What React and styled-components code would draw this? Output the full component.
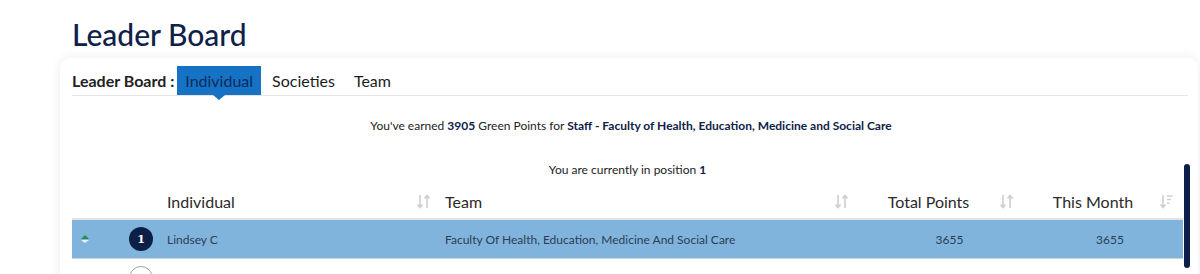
import styled, { createGlobalStyle } from "styled-components";

const GlobalStyle = createGlobalStyle`
  body {
    margin: 0;
    background: #ffffff;
    font-family: Lato, "Open Sans", sans-serif;
    color: #2b3a4a;
  }
`;

const Page = styled.div`
  width: 1200px;
  height: 274px;
  overflow: hidden;
  padding: 15px 2px 0 60px;
  box-sizing: border-box;
`;

const Title = styled.h1`
  margin: 0 0 5px 12px;
  font-size: 30px;
  font-weight: 500;
  line-height: 38px;
  color: #0f2149;
`;

const Card = styled.div`
  background: #fff;
  border-radius: 10px 10px 0 0;
  box-shadow: 0 0 12px rgba(0, 0, 0, 0.08);
  padding: 8px 8px 0 12px;
  height: 300px;
`;

const TabBar = styled.div`
  display: flex;
  align-items: stretch;
  height: 29px;
  border-bottom: 1px solid #e4e4e4;
  margin-right: 2px;
`;

const TabLabel = styled.span`
  display: flex;
  align-items: center;
  font-size: 16px;
  font-weight: 700;
  color: #222;
  margin-right: 3px;
`;

const Tab = styled.button`
  position: relative;
  border: none;
  font-family: inherit;
  font-size: 16px;
  padding: 0 8px;
  margin-right: 3px;
  color: ${(p) => (p.$active ? "#0c2b5c" : "#1c1c1c")};
  background: ${(p) => (p.$active ? "#1672c4" : "transparent")};

  &::after {
    content: "";
    display: ${(p) => (p.$active ? "block" : "none")};
    position: absolute;
    left: 50%;
    bottom: -5px;
    margin-left: -6px;
    border-left: 6px solid transparent;
    border-right: 6px solid transparent;
    border-top: 5px solid #1672c4;
  }
`;

const Message = styled.p`
  margin: ${(p) => p.$margin};
  text-align: center;
  font-size: 12px;
  line-height: 15px;
  color: #222;

  b {
    color: #0f2149;
  }
`;

const ScrollArea = styled.div`
  display: flex;
`;

const Content = styled.div`
  flex: 1;
`;

const Rail = styled.div`
  width: 8px;
  padding-left: 1px;
`;

const Thumb = styled.div`
  margin-top: 31px;
  height: 104px;
  width: 6px;
  border-radius: 4px;
  background: #0c1f4a;
`;

const Grid = styled.div`
  display: grid;
  grid-template-columns: 53px 32px 283px 418px 165px 160px;
  margin-top: 8px;
`;

const HeadCell = styled.div`
  position: relative;
  height: 33px;
  display: flex;
  align-items: center;
  justify-content: ${(p) => (p.$center ? "center" : "flex-start")};
  padding: ${(p) => p.$pad || "0"};
  font-size: 16px;
  color: #2a2a2a;
  border-bottom: 2px solid #e4e4e4;
`;

const SortIcon = styled.svg`
  position: absolute;
  right: 10px;
  top: 9px;
`;

const Cell = styled.div`
  height: 38px;
  display: flex;
  align-items: center;
  justify-content: ${(p) => (p.$center ? "center" : "flex-start")};
  padding: ${(p) => p.$pad || "0"};
  font-size: 12px;
  color: #2d3d52;
  background: ${(p) => (p.$hl ? "#80b4dd" : "#fff")};
  border-bottom: 1px solid #cfd4da;
`;

const Badge = styled.span`
  width: 24px;
  height: 24px;
  box-sizing: border-box;
  border-radius: 50%;
  display: flex;
  align-items: center;
  justify-content: center;
  font-family: "DejaVu Serif", serif;
  font-size: 11px;
  font-weight: 700;
  color: #fff;
  background: ${(p) => (p.$top ? "#0d1f45" : "#fff")};
  border: ${(p) => (p.$top ? "none" : "1px solid #9aa79c")};
`;

const Sort = ({ last }) => (
  <SortIcon width="13" height="15" viewBox="0 0 13 15" fill="none" stroke="#cfcfcf" strokeWidth="1.6">
    <path d="M3 1v12M0.5 10.5L3 13.5L5.5 10.5" />
    {last ? (
      <path d="M7 2h5.5M7 5.5h4M7 9h2.5" />
    ) : (
      <path d="M10 14V2M7.5 4.5L10 1.5L12.5 4.5" />
    )}
  </SortIcon>
);

const Trend = ({ up }) => (
  <svg width="10" height="10" viewBox="0 0 10 10">
    <path d="M5 1L9 5H1z" fill={up ? "#2c8a4e" : "#d5dbe0"} />
    <path d="M1 6H9L5 9z" fill="#e8eef3" />
  </svg>
);

const rows = [
  { rank: 1, name: "Lindsey C", team: "Faculty Of Health, Education, Medicine And Social Care", total: 3655, month: 3655, up: true },
  { rank: 2, name: "Erisvan S", team: "Chelmsford Student Village", total: 3310, month: 3310, up: false },
];

export default function App() {
  return (
    <>
      <GlobalStyle />
      <Page>
        <Title>Leader Board</Title>
        <Card>
          <TabBar>
            <TabLabel>Leader Board :</TabLabel>
            <Tab $active>Individual</Tab>
            <Tab>Societies</Tab>
            <Tab>Team</Tab>
          </TabBar>
          <Message $margin="22px 0 0">
            You've earned <b>3905</b> Green Points for{" "}
            <b>Staff - Faculty of Health, Education, Medicine and Social Care</b>
          </Message>
          <ScrollArea>
            <Content>
              <Message $margin="29px 0 0">
                You are currently in position <b>1</b>
              </Message>
              <Grid>
                <HeadCell />
                <HeadCell />
                <HeadCell $pad="0 0 0 10px">
                  Individual
                  <Sort />
                </HeadCell>
                <HeadCell $pad="0 0 0 5px">
                  Team
                  <Sort />
                </HeadCell>
                <HeadCell $center $pad="0 24px 0 0">
                  Total Points
                  <Sort />
                </HeadCell>
                <HeadCell $center $pad="0 20px 0 0">
                  This Month
                  <Sort last />
                </HeadCell>
                {rows.map((r) => (
                  <>
                    <Cell $hl={r.rank === 1} $pad="0 0 0 8px">
                      <Trend up={r.up} />
                    </Cell>
                    <Cell $hl={r.rank === 1} $center>
                      <Badge $top={r.rank === 1}>{r.rank === 1 ? r.rank : ""}</Badge>
                    </Cell>
                    <Cell $hl={r.rank === 1} $pad="0 0 0 10px">{r.name}</Cell>
                    <Cell $hl={r.rank === 1} $pad="0 0 0 5px">{r.team}</Cell>
                    <Cell $hl={r.rank === 1} $center $pad="0 0 0 18px">{r.total}</Cell>
                    <Cell $hl={r.rank === 1} $center $pad="0 0 0 14px">{r.month}</Cell>
                  </>
                ))}
              </Grid>
            </Content>
            <Rail>
              <Thumb />
            </Rail>
          </ScrollArea>
        </Card>
      </Page>
    </>
  );
}
